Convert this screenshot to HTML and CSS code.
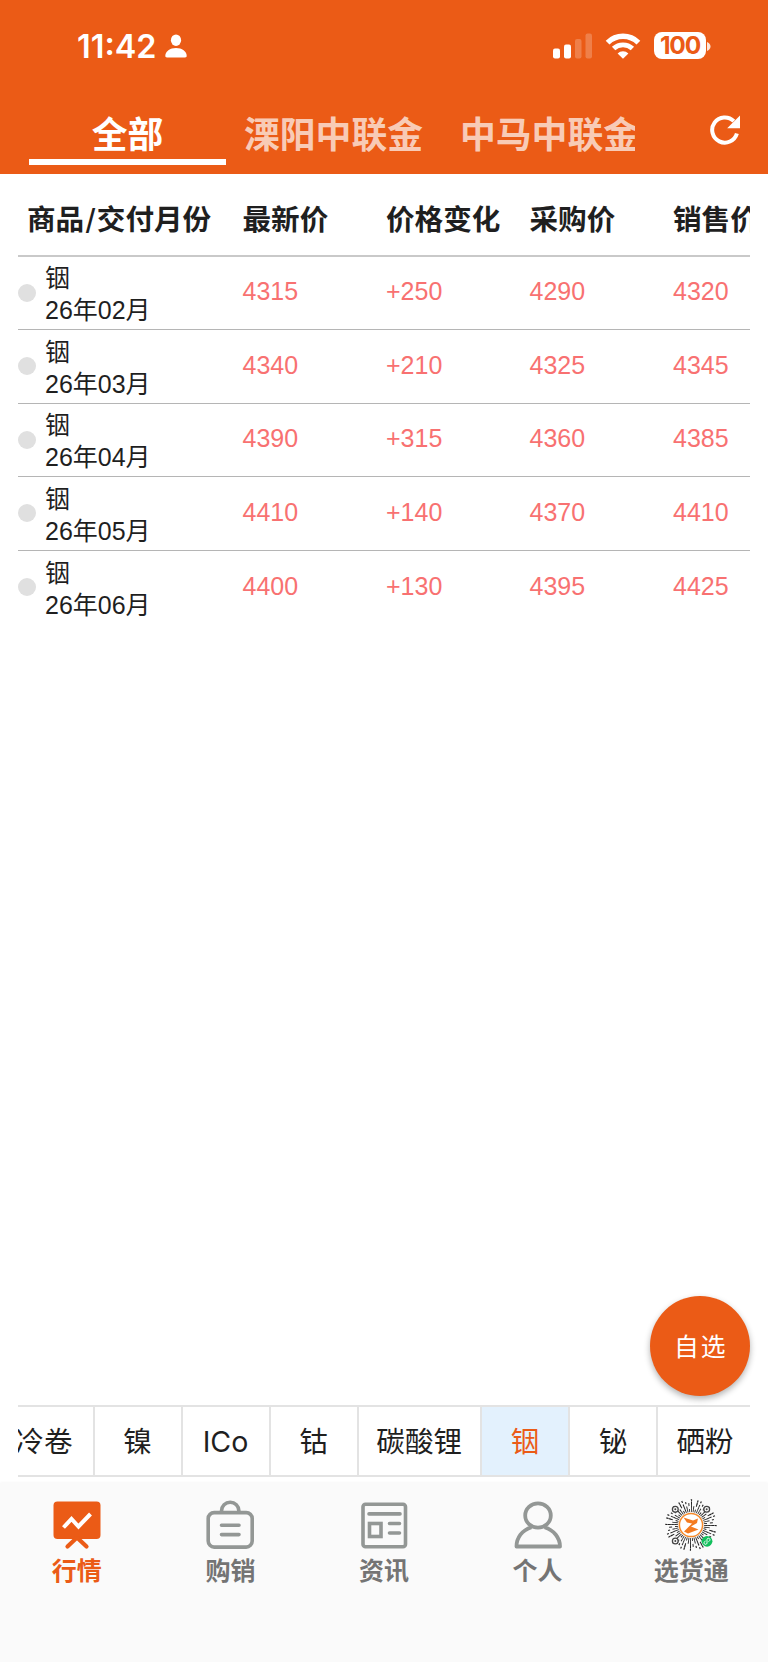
FILE: index.html
```html
<!DOCTYPE html>
<html lang="zh-CN">
<head>
    <meta charset="UTF-8">
    <meta name="viewport" content="width=device-width, initial-scale=1.0">
    <title>行情</title>
    <link rel="stylesheet" href="styles.css">
</head>
<body>

    <header class="header">
        <div class="status-bar">
            <span class="time">11:42</span>
            <svg class="status-user" width="22" height="24" viewBox="0 0 22 24" fill="#fff">
                <ellipse cx="11" cy="6.2" rx="5.1" ry="5.8"/>
                <path d="M2 23.5C.8 23.5.3 22.9.3 21.8.3 17.4 5 13.9 11 13.9s10.7 3.5 10.7 7.9c0 1.1-.5 1.7-1.7 1.7z"/>
            </svg>
            <div class="status-right">
                <svg width="40" height="26" viewBox="0 0 40 26" fill="#fff">
                    <rect x="0" y="15.5" width="7" height="10" rx="2"/>
                    <rect x="11" y="11.5" width="7" height="14" rx="2"/>
                    <rect x="22" y="6" width="6.5" height="19.5" rx="2" opacity=".22"/>
                    <rect x="32.5" y="0.5" width="6.5" height="25" rx="2" opacity=".22"/>
                </svg>
                <svg class="wifi" width="36" height="26" viewBox="0 0 36 26">
                    <g fill="none" stroke="#fff" stroke-width="5.4">
                        <path d="M2.6 9.6a22 22 0 0 1 30.800 0"/>
                        <path d="M8.600 15.600a13.600 13.600 0 0 1 18.800 0" stroke-width="4.800"/>
                    </g>
                    <path d="M18 25.700l-5.400-5.300a7.700 7.700 0 0 1 10.800 0z" fill="#fff"/>
                </svg>
                <div class="battery">100</div>
                <svg class="battery-cap" width="4" height="9" viewBox="0 0 4 9"><path d="M0 0c2 .7 3.500 2.400 3.500 4.500S2 8.300 0 9z" fill="#fff" opacity=".85"/></svg>
            </div>
        </div>
        <div class="tab-bar">
            <nav class="tabs">
                <a class="tab active">全部</a>
                <a class="tab">溧阳中联金</a>
                <a class="tab">中马中联金</a>
            </nav>
            <svg class="refresh" width="30" height="30" viewBox="0 0 30 30">
                <path d="M26.900 18.500A12.600 12.600 0 1 1 23.800 6.200" fill="none" stroke="#fff" stroke-width="4"/>
                <path d="M30 .5V13.300H17.200z" fill="#fff"/>
            </svg>
        </div>
    </header>

    <main class="content">
        <div class="quotes">
            <div class="row row-head">
                <span>商品<i class="slash">/</i>交付月份</span><span>最新价</span><span>价格变化</span><span>采购价</span><span>销售价</span>
            </div>
            <div class="row">
                <div class="product"><i class="dot"></i><p>铟<br>26年02月</p></div>
                <span>4315</span><span>+250</span><span>4290</span><span>4320</span>
            </div>
            <div class="row">
                <div class="product"><i class="dot"></i><p>铟<br>26年03月</p></div>
                <span>4340</span><span>+210</span><span>4325</span><span>4345</span>
            </div>
            <div class="row">
                <div class="product"><i class="dot"></i><p>铟<br>26年04月</p></div>
                <span>4390</span><span>+315</span><span>4360</span><span>4385</span>
            </div>
            <div class="row">
                <div class="product"><i class="dot"></i><p>铟<br>26年05月</p></div>
                <span>4410</span><span>+140</span><span>4370</span><span>4410</span>
            </div>
            <div class="row">
                <div class="product"><i class="dot"></i><p>铟<br>26年06月</p></div>
                <span>4400</span><span>+130</span><span>4395</span><span>4425</span>
            </div>
        </div>

        <button class="fab">自选</button>

        <div class="metals">
            <div class="metal first">冷卷</div>
            <div class="metal">镍</div>
            <div class="metal">ICo</div>
            <div class="metal">钴</div>
            <div class="metal wide">碳酸锂</div>
            <div class="metal selected">铟</div>
            <div class="metal">铋</div>
            <div class="metal last">硒粉</div>
        </div>
    </main>

    <footer class="bottom-nav">
        <a class="nav-item active">
            <svg width="52" height="52" viewBox="0 0 52 52">
                <rect x="2.500" y="1.500" width="47" height="37.500" rx="4" fill="#eb5b16"/>
                <path d="M12.500 27.500l8-8.500 7 7.500 12-12.500" fill="none" stroke="#fff" stroke-width="4"/>
                <path d="M25 38.500L16.500 46.500M27 38.500l8.500 8" fill="none" stroke="#eb5b16" stroke-width="4.200" stroke-linecap="round"/>
            </svg>
            <span>行情</span>
        </a>
        <a class="nav-item">
            <svg width="52" height="52" viewBox="0 0 52 52" fill="none" stroke="#939795" stroke-width="3.600" stroke-linecap="round">
                <rect x="4.200" y="12.600" width="44" height="34.500" rx="6"/>
                <path d="M17.500 12v-1a8.700 8.700 0 0 1 17.400 0v1M17.500 25.200h17.500M17.500 34.600h17.500"/>
            </svg>
            <span>购销</span>
        </a>
        <a class="nav-item">
            <svg width="52" height="52" viewBox="0 0 52 52" fill="none" stroke="#939795" stroke-width="3.600" stroke-linecap="round">
                <rect x="5" y="4.200" width="42.500" height="42.500" rx="2.500"/>
                <rect x="11.500" y="23.500" width="11.500" height="13"/>
                <path d="M11 13.900h31M31.500 23.500h10M31.500 33h10"/>
            </svg>
            <span>资讯</span>
        </a>
        <a class="nav-item">
            <svg width="52" height="52" viewBox="0 0 52 52" fill="none" stroke="#939795" stroke-width="3.800" stroke-linejoin="round">
                <ellipse cx="26" cy="15.500" rx="12.800" ry="12.200"/>
                <path d="M19.500 27.200C10 30 4.500 38 4.500 46.500h43.500C48 38 42 30 32.500 27.200"/>
            </svg>
            <span>个人</span>
        </a>
        <a class="nav-item">
            <svg width="54" height="54" viewBox="0 0 54 54">
                <!-- code rays, every ring is cut into the same 48 steps -->
                <g fill="none" stroke="#222" stroke-width="3">
                    <circle cx="27" cy="26" r="14.500" pathLength="48" stroke-dasharray=".45 .55"/>
                    <circle cx="27" cy="26" r="17.500" pathLength="48" stroke-dasharray=".4 .6 .4 1.600"/>
                    <circle cx="27" cy="26" r="20.500" pathLength="48" stroke-dasharray=".36 1.640 .36 .640"/>
                    <circle cx="27" cy="26" r="22.500" pathLength="48" stroke-width="2" stroke-dasharray=".36 1.640"/>
                    <circle cx="27" cy="26" r="24.700" pathLength="48" stroke-width="2" stroke-dasharray=".36 1.640 .36 .640 .36 2.640"/>
                </g>
                <g fill="#fafafa" stroke="#444" stroke-width="1.300">
                    <circle cx="11.300" cy="10.300" r="2.900"/><circle cx="42.700" cy="10.300" r="2.900"/><circle cx="11.300" cy="42" r="2.900"/>
                </g>
                <g fill="#444">
                    <circle cx="11.300" cy="10.300" r="1"/><circle cx="42.700" cy="10.300" r="1"/><circle cx="11.300" cy="42" r="1"/>
                </g>
                <circle cx="27" cy="26" r="11.600" fill="#fff" stroke="#f58a2b" stroke-width="1.500"/>
                <path d="M19.500 18.500L29 21.500 34 19.500 33 24 27 27.500 34.500 30.500 24 34.500 20 32.500 25 27.500 28 24.500 23 23.500z" fill="#f47b20"/>
                <circle cx="43" cy="42.300" r="5.400" fill="#12bf5c"/>
                <path d="M41.500 42c-2 .8-1.800 3.300 0 3.300 1.900 0 1.500-1.800 1.500-3s-.4-3 1.500-3c1.800 0 2 2.500 0 3.300" fill="none" stroke="#fff" stroke-width="1"/>
            </svg>
            <span>选货通</span>
        </a>
    </footer>

</body>
</html>
```

FILE: styles.css
```css
* { box-sizing: border-box; }

body {
    margin: 0;
    height: 1662px;
    display: flex;
    flex-direction: column;
    background-color: #fff;
    color: #1f1f1f;
    font-family: "Liberation Sans", "Noto Sans CJK SC", sans-serif;
    overflow: hidden;
}

svg { display: block; flex: none; }

/* Header */
.header {
    height: 174px;
    flex: none;
    background-color: #eb5b16;
    color: #fff;
}

.status-bar {
    height: 92px;
    padding: 0 57px 0 77px;
    display: flex;
    align-items: center;
}

.time {
    width: 88px;
    padding-top: 2px;
    font: 600 32.4px/40px Inter, sans-serif;
}

.status-right {
    height: 92px;
    margin-left: auto;
    display: flex;
    align-items: center;
}

.wifi { margin: 0 13px 0 12px; }

.battery {
    width: 52px;
    height: 27px;
    margin-bottom: 1px;
    border-radius: 8px;
    background-color: #fff;
    color: #eb5b16;
    font: 700 24.5px/27px Inter, sans-serif;
    letter-spacing: -1.2px;
    text-align: center;
}

.battery-cap { margin-left: 1px; }

.tab-bar {
    height: 82px;
    padding: 0 28px 0 29px;
    display: flex;
}

.tabs {
    width: 606px;
    display: flex;
    overflow: hidden;
}

.tab {
    height: 73px;
    flex: none;
    padding: 0 17px;
    color: rgba(255, 255, 255, 0.7);
    font-size: 35.8px;
    font-weight: 700;
    line-height: 89px;
    white-space: nowrap;
}

.tab.active {
    width: 197px;
    margin-right: 1px;
    padding: 0;
    border-bottom: 6px solid #fff;
    color: #fff;
    text-align: center;
}

.tab + .tab + .tab { padding-left: 20px; }

.refresh { margin: 23px 0 0 auto; }

/* Quote table */
.content {
    position: relative;
    flex: 1;
    padding: 0 18px;
    display: flex;
    flex-direction: column;
}

.quotes { overflow: hidden; }

.row {
    height: 73.5px;
    padding-bottom: 2px;
    display: grid;
    grid-template-columns: 224.5px repeat(4, 143.5px);
    align-items: center;
    border-bottom: 1px solid #b5b5b5;
    color: #f87171;
    font-size: 25px;
    white-space: nowrap;
}

.row:last-child { border-bottom: 0; }

.row-head {
    height: 82.5px;
    padding: 7px 0 0;
    border-bottom: 2px solid #c9c9c9;
    color: #1f1f1f;
    font-size: 28.6px;
    font-weight: 700;
}

.row-head span:first-child { padding-left: 9px; }

.slash {
    margin: 0 1px;
    font-family: Inter, sans-serif;
    font-style: normal;
    font-weight: 500;
}

.product {
    display: flex;
    align-items: center;
    color: #1f1f1f;
}

.product p {
    margin: 5px 0 0 9px;
    line-height: 32px;
}

.dot {
    width: 18px;
    height: 18px;
    margin-top: 2px;
    border-radius: 50%;
    background-color: #e0e0e0;
}

.fab {
    position: absolute;
    right: 18px;
    bottom: 87px;
    width: 100.5px;
    height: 100.5px;
    padding: 0 0 1px 2px;
    border: 0;
    border-radius: 50%;
    background-color: #eb5b16;
    box-shadow: 0 3px 6px rgba(0, 0, 0, 0.3);
    color: #fff;
    font-family: inherit;
    font-size: 24.8px;
    letter-spacing: 2px;
}

/* Metal picker */
.metals {
    height: 72px;
    margin: auto 0 6px;
    display: flex;
    border-top: 2px solid #e3e3e3;
    border-bottom: 2px solid #e3e3e3;
    font-family: Inter, "Noto Sans CJK SC", sans-serif;
    font-size: 28.6px;
    line-height: 70px;
    text-align: center;
    white-space: nowrap;
    overflow: hidden;
}

.metal {
    width: 88px;
    flex: none;
    border-right: 2px solid #e3e3e3;
}

.metal.first {
    width: 76.5px;
    display: flex;
    justify-content: flex-end;
    padding-right: 20px;
}

.metal.wide { width: 123.5px; }
.metal.last { width: 94px; border-right: 0; }

.metal.selected {
    background-color: #e3f1fd;
    color: #eb5b16;
}

/* Bottom navigation */
.bottom-nav {
    height: 179px;
    flex: none;
    display: flex;
    background-color: #fafafa;
    box-shadow: 0 0 3px rgba(0, 0, 0, 0.06);
}

.nav-item {
    flex: 1;
    padding-top: 16px;
    display: flex;
    flex-direction: column;
    align-items: center;
    color: #747474;
    font-size: 25px;
    font-weight: 700;
    line-height: 36px;
}

.nav-item svg { height: 54px; }
.nav-item.active { color: #eb5b16; }
```
